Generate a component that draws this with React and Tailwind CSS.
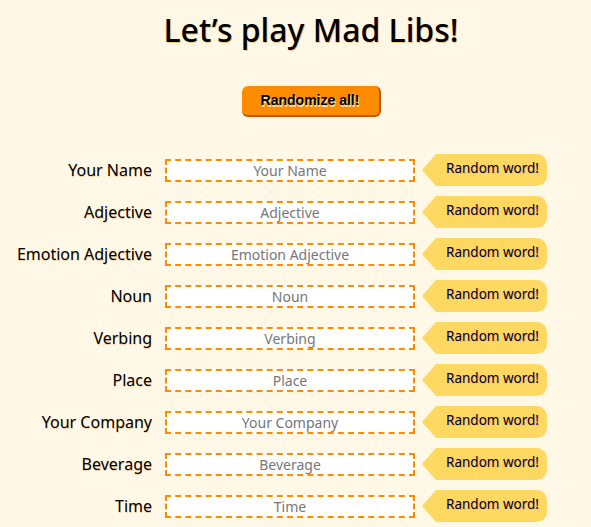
import React from "react";

const fields = [
  "Your Name",
  "Adjective",
  "Emotion Adjective",
  "Noun",
  "Verbing",
  "Place",
  "Your Company",
  "Beverage",
  "Time",
];

export default function App() {
  return (
    <div className="min-h-[527px] w-full bg-[#fff8e6] font-['Noto_Sans',sans-serif] text-black overflow-hidden">
      <h1 className="pl-[31px] pt-[12px] text-center text-[32px] leading-[36px] font-medium [text-shadow:1px_1px_0_#f7c98f]">
        Let’s play Mad Libs!
      </h1>
      <div className="mt-[38px] flex justify-center pl-[31px]">
        <button className="h-[31px] w-[139px] rounded-[6px] border-r-2 border-b-2 border-[#c45400] bg-[#ff8c00] font-['Liberation_Sans',Arial,sans-serif] text-[14px] font-bold text-black [text-shadow:1px_2px_0_#ffe3b0]">
          Randomize all!
        </button>
      </div>
      <div className="mt-[37px] flex flex-col gap-[10px]">
        {fields.map((f) => (
          <div key={f} className="flex h-[32px] items-center">
            <label className="w-[152px] shrink-0 text-right text-[16px] font-normal [text-shadow:0.5px_0.5px_0_#f5d0a8]">
              {f}
            </label>
            <input
              placeholder={f}
              className="ml-[13px] h-[23px] w-[250px] border-2 border-dashed border-[#ff8c00] bg-white text-center text-[14px] text-black outline-none placeholder:text-[#777]"
            />
            <button className="ml-[7px] h-[32px] w-[125px] shrink-0 whitespace-nowrap rounded-r-[10px] bg-[#ffd862] pb-[3px] pl-[16px] pr-0 text-center text-[13.5px] font-normal text-black [clip-path:polygon(14px_0,100%_0,100%_100%,14px_100%,0_50%)] [text-shadow:1px_1px_0_#f8b9a0]">
              Random word!
            </button>
          </div>
        ))}
      </div>
    </div>
  );
}
